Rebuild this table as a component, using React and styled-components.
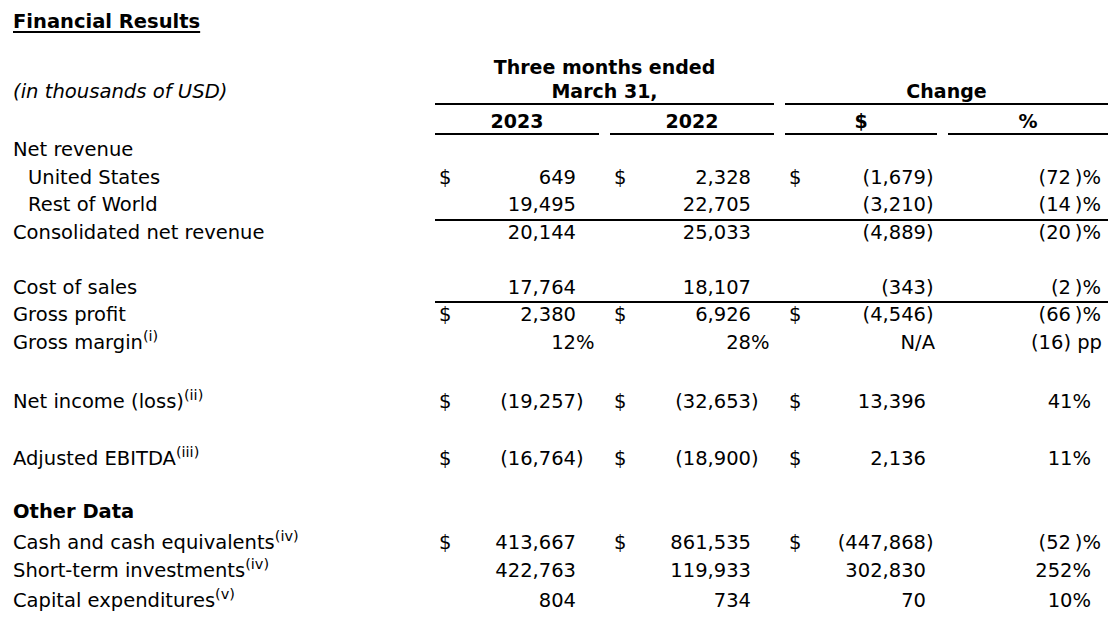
import React from "react";
import styled, { createGlobalStyle } from "styled-components";

const GlobalStyle = createGlobalStyle`
  html, body {
    margin: 0;
    padding: 0;
    background: #ffffff;
  }
  body {
    font-family: "DejaVu Sans", Verdana, sans-serif;
    color: #000;
  }
`;

const COLS = "411px 164px 164px 152px 160px";

const Page = styled.div`
  width: 1118px;
  padding: 10px 0 0 13px;
  box-sizing: border-box;
`;

const Title = styled.h1`
  margin: 0;
  font-size: 19.5px;
  line-height: 24px;
  font-weight: bold;
  text-decoration: underline;
  text-decoration-thickness: 2px;
  text-underline-offset: 3px;
`;

const HeadRow = styled.div`
  display: grid;
  grid-template-columns: ${COLS};
  column-gap: 11px;
  width: 1095px;
  margin-top: ${(p) => p.$gap || 0}px;
  font-size: 19px;
  line-height: 24px;
`;

const HeadCell = styled.div`
  grid-column: ${(p) => p.$span || "auto"};
  text-align: center;
  font-weight: bold;
  padding-top: ${(p) => p.$padTop || 0}px;
  border-bottom: ${(p) => (p.$line ? "2px solid #000" : "none")};
`;

const Caption = styled.div`
  font-style: italic;
  font-size: 19.6px;
  align-self: center;
`;

const Row = styled.div`
  display: grid;
  grid-template-columns: ${COLS};
  column-gap: 11px;
  align-items: center;
  width: 1095px;
  height: 27.5px;
  margin-top: ${(p) => p.$gap || 0}px;
  font-size: 19.5px;
  background: ${(p) =>
    p.$rule
      ? "linear-gradient(#000, #000) right top / calc(100% - 422px) 2px no-repeat"
      : "none"};
`;

const Label = styled.div`
  padding-left: ${(p) => (p.$indent ? 15 : 0)}px;
  font-weight: ${(p) => (p.$bold ? "bold" : "normal")};
  white-space: nowrap;
`;

const Sup = styled.sup`
  font-size: 14.5px;
  line-height: 0;
  vertical-align: 8px;
`;

const ValueCell = styled.div`
  display: flex;
  align-items: center;
  padding-left: 4px;
  white-space: nowrap;
`;

const Dollar = styled.span`
  width: 20px;
`;

const Amount = styled.span`
  flex: 1;
  text-align: right;
  padding-right: ${(p) => p.$pad}px;
`;

const Hang = styled.span`
  display: inline-block;
  width: 0;
  text-align: left;
  white-space: pre;
`;

const PctCell = styled.div`
  text-align: right;
  white-space: pre;
  padding-right: ${(p) => p.$pad}px;
`;

const PADS = [23, 23, 11];

const rows = [
  { label: "Net revenue", gap: 1 },
  {
    label: "United States",
    indent: true,
    dollar: true,
    vals: ["649", "2,328", "(1,679)"],
    pct: "(72\u2009)%",
  },
  {
    label: "Rest of World",
    indent: true,
    vals: ["19,495", "22,705", "(3,210)"],
    pct: "(14\u2009)%",
  },
  {
    label: "Consolidated net revenue",
    rule: true,
    vals: ["20,144", "25,033", "(4,889)"],
    pct: "(20\u2009)%",
  },
  {
    label: "Cost of sales",
    gap: 27.5,
    vals: ["17,764", "18,107", "(343)"],
    pct: "(2\u2009)%",
  },
  {
    label: "Gross profit",
    rule: true,
    dollar: true,
    vals: ["2,380", "6,926", "(4,546)"],
    pct: "(66\u2009)%",
  },
  {
    label: "Gross margin",
    sup: "(i)",
    vals: ["12%", "28%", "N/A"],
    pct: "(16) pp",
  },
  {
    label: "Net income (loss)",
    sup: "(ii)",
    gap: 32,
    dollar: true,
    vals: ["(19,257)", "(32,653)", "13,396"],
    pct: "41%",
  },
  {
    label: "Adjusted EBITDA",
    sup: "(iii)",
    gap: 29.5,
    dollar: true,
    vals: ["(16,764)", "(18,900)", "2,136"],
    pct: "11%",
  },
  { label: "Other Data", bold: true, gap: 25.5 },
  {
    label: "Cash and cash equivalents",
    sup: "(iv)",
    gap: 3.5,
    dollar: true,
    vals: ["413,667", "861,535", "(447,868)"],
    pct: "(52\u2009)%",
  },
  {
    label: "Short-term investments",
    sup: "(iv)",
    vals: ["422,763", "119,933", "302,830"],
    pct: "252%",
  },
  {
    label: "Capital expenditures",
    sup: "(v)",
    gap: 2.5,
    vals: ["804", "734", "70"],
    pct: "10%",
  },
];

const pctPad = (s) => (s.endsWith(")%") ? 7 : s.endsWith("pp") ? 6 : 17);

const Figure = ({ text }) => {
  if (text === "N/A") return <>N/A</>;
  const last = text.slice(-1);
  if (last === ")" || last === "%") {
    return (
      <>
        {text.slice(0, -1)}
        <Hang>{last}</Hang>
      </>
    );
  }
  return <>{text}</>;
};

const DataRow = ({ row }) => (
  <Row $gap={row.gap} $rule={row.rule}>
    <Label $indent={row.indent} $bold={row.bold}>
      {row.label}
      {row.sup && <Sup>{row.sup}</Sup>}
    </Label>
    {row.vals &&
      row.vals.map((v, i) => (
        <ValueCell key={i}>
          <Dollar>{row.dollar ? "$" : ""}</Dollar>
          <Amount $pad={v === "N/A" ? PADS[i] - 9 : PADS[i]}>
            <Figure text={v} />
          </Amount>
        </ValueCell>
      ))}
    {row.pct && <PctCell $pad={pctPad(row.pct)}>{row.pct}</PctCell>}
  </Row>
);

export default function App() {
  return (
    <Page>
      <GlobalStyle />
      <Title>Financial Results</Title>
      <HeadRow $gap={21}>
        <div />
        <HeadCell $span="2 / 4">Three months ended</HeadCell>
      </HeadRow>
      <HeadRow>
        <Caption>(in thousands of USD)</Caption>
        <HeadCell $span="2 / 4" $line>
          March 31,
        </HeadCell>
        <HeadCell $span="4 / 6" $line>
          Change
        </HeadCell>
      </HeadRow>
      <HeadRow>
        <div />
        <HeadCell $line $padTop={4}>
          2023
        </HeadCell>
        <HeadCell $line $padTop={4}>
          2022
        </HeadCell>
        <HeadCell $line $padTop={4}>
          $
        </HeadCell>
        <HeadCell $line $padTop={4}>
          %
        </HeadCell>
      </HeadRow>
      {rows.map((r) => (
        <DataRow key={r.label} row={r} />
      ))}
    </Page>
  );
}
